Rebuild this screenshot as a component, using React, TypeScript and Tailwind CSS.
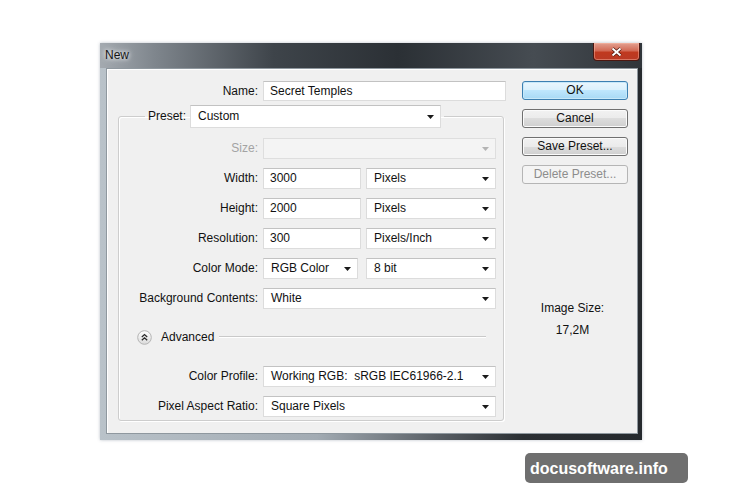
import React from 'react';

function Arrow({ disabled }: { disabled?: boolean }) {
  return (
    <svg width="7" height="4" viewBox="0 0 7 4" className="mr-[6px] shrink-0">
      <path d="M0 0 L7 0 L3.5 4 Z" fill={disabled ? '#b4b4b4' : '#1a1a1a'} />
    </svg>
  );
}

function Field({ value, width }: { value: string; width: string }) {
  return (
    <div
      className={`flex items-center h-[21px] ${width} bg-white border border-[#dcdcdc] border-t-[#c2c2c2] pl-[6px] text-[#111]`}
    >
      {value}
    </div>
  );
}

function Select({
  value,
  width,
  disabled,
  tall,
}: {
  value: string;
  width: string;
  disabled?: boolean;
  tall?: boolean;
}) {
  return (
    <div
      className={`flex items-center ${tall ? 'h-[23px]' : 'h-[21px]'} ${width} border ${
        disabled
          ? 'bg-[#f4f4f4] border-[#dedede]'
          : 'bg-white border-[#dcdcdc] border-t-[#c2c2c2]'
      }`}
    >
      <span className="flex-1 pl-[7px] whitespace-pre overflow-hidden text-[#111]">{value}</span>
      <Arrow disabled={disabled} />
    </div>
  );
}

function Row({
  label,
  children,
  muted,
}: {
  label: string;
  children: React.ReactNode;
  muted?: boolean;
}) {
  return (
    <div className="flex items-center">
      <div
        className={`w-[144px] pr-[5px] text-right whitespace-nowrap ${
          muted ? 'text-[#a3a3a3]' : 'text-[#111]'
        }`}
      >
        {label}
      </div>
      {children}
    </div>
  );
}

function Button({
  label,
  variant = 'normal',
}: {
  label: string;
  variant?: 'default' | 'normal' | 'disabled';
}) {
  const styles = {
    default:
      'border-[#3c7fb1] bg-[linear-gradient(to_bottom,#eaf6fd_0%,#d9f0fc_50%,#bee6fd_50%,#a7d9f5_100%)] text-[#111] shadow-[inset_0_0_0_1px_#c7e8f9]',
    normal:
      'border-[#707070] bg-[linear-gradient(to_bottom,#f2f2f2_0%,#ebebeb_50%,#dddddd_50%,#cfcfcf_100%)] text-[#111] shadow-[inset_0_0_0_1px_#fbfbfb]',
    disabled: 'border-[#b5b5b5] bg-[#f4f4f4] text-[#8d8d8d]',
  }[variant];
  return (
    <div
      className={`flex items-center justify-center w-[106px] h-[19px] rounded-[3px] border ${styles}`}
    >
      {label}
    </div>
  );
}

function AdvancedIcon() {
  return (
    <svg width="15" height="15" viewBox="0 0 15 15">
      <defs>
        <linearGradient id="adv" x1="0" y1="0" x2="0" y2="1">
          <stop offset="0" stopColor="#ffffff" />
          <stop offset="1" stopColor="#dadada" />
        </linearGradient>
      </defs>
      <circle cx="7.5" cy="7.5" r="6.8" fill="url(#adv)" stroke="#b4b4b4" />
      <path
        d="M4.8 7 L7.5 4.6 L10.2 7 M4.8 10.2 L7.5 7.8 L10.2 10.2"
        fill="none"
        stroke="#2a2a2a"
        strokeWidth="1.3"
      />
    </svg>
  );
}

export default function App() {
  return (
    <div className="relative w-[740px] h-[493px] bg-white overflow-hidden font-['Liberation_Sans',Arial,sans-serif] text-[12px] leading-[15px]">
      <div className="pt-[43px] pl-[100px]">
        <div className="w-[542px] h-[397px] flex flex-col bg-[linear-gradient(to_right,#b9c2c9_0%,#a2abb3_40%,#5a6066_62%,#2b2f33_78%,#262a2e_100%)] shadow-[0_0_3px_rgba(60,80,100,0.35)]">
          {/* title bar */}
          <div className="flex items-start h-[25px] bg-[linear-gradient(to_right,#a4aab0_0%,#7f868d_10%,#3e444a_32%,#2b3035_55%,#464c52_80%,#30353a_100%)]">
            <div className="pl-[5px] pt-[5px] text-[12px] text-[#151515] [text-shadow:0_0_4px_#ffffff,0_0_6px_#e0e4e8]">
              New
            </div>
            <div className="flex-1" />
            <div className="mr-[2px] w-[47px] h-[18px] flex items-center justify-center rounded-b-[4px] border border-t-0 border-[#4d1710] bg-[linear-gradient(to_bottom,#e3a191_0%,#d26a55_45%,#c0391f_55%,#b93a25_100%)] shadow-[inset_0_0_0_1px_rgba(255,190,170,0.45)]">
              <svg width="11" height="10" viewBox="0 0 11 10">
                <path d="M1.5 1.5 L9.5 8.5 M9.5 1.5 L1.5 8.5" stroke="#4a1208" strokeWidth="3.4" />
                <path d="M1.5 1.5 L9.5 8.5 M9.5 1.5 L1.5 8.5" stroke="#ffffff" strokeWidth="2" />
              </svg>
            </div>
          </div>

          {/* client area */}
          <div className="flex-1 pl-[6px] pr-[4px] pb-[6px] flex">
            <div className="flex-1 flex border border-[#8f989f] bg-[#f0f0f0] shadow-[inset_1px_1px_0_#ffffff]">
              {/* left column */}
              <div className="pt-[12px] flex flex-col">
                <div className="flex items-center">
                  <div className="w-[156px] pr-[5px] text-right text-[#111]">Name:</div>
                  <div className="flex items-center h-[20px] w-[243px] bg-white border border-[#dcdcdc] border-t-[#c2c2c2] pl-[6px] text-[#111]">
                    Secret Temples
                  </div>
                </div>

                <fieldset className="ml-[11px] mt-[4px] w-[386px] border border-[#cdcdcd] rounded-[3px] shadow-[inset_1px_1px_0_#ffffff,1px_1px_0_#ffffff]">
                  <legend className="ml-[26px] px-[3px]">
                    <div className="flex items-center gap-[4px]">
                      <span className="text-[#111]">Preset:</span>
                      <Select value="Custom" width="w-[251px]" tall />
                    </div>
                  </legend>
                  <div className="pt-[10px] pb-[3px] flex flex-col">
                    <div className="flex flex-col gap-[9px]">
                      <Row label="Size:" muted>
                        <Select value="" width="w-[233px]" disabled />
                      </Row>
                      <Row label="Width:">
                        <Field value="3000" width="w-[98px]" />
                        <div className="w-[5px]" />
                        <Select value="Pixels" width="w-[130px]" />
                      </Row>
                      <Row label="Height:">
                        <Field value="2000" width="w-[98px]" />
                        <div className="w-[5px]" />
                        <Select value="Pixels" width="w-[130px]" />
                      </Row>
                      <Row label="Resolution:">
                        <Field value="300" width="w-[98px]" />
                        <div className="w-[5px]" />
                        <Select value="Pixels/Inch" width="w-[130px]" />
                      </Row>
                      <Row label="Color Mode:">
                        <Select value="RGB Color" width="w-[95px]" />
                        <div className="w-[8px]" />
                        <Select value="8 bit" width="w-[130px]" />
                      </Row>
                      <Row label="Background Contents:">
                        <Select value="White" width="w-[233px]" />
                      </Row>
                    </div>

                    <div className="mt-[20px] h-[16px] flex items-center pl-[18px] pr-[17px]">
                      <AdvancedIcon />
                      <span className="ml-[9px] text-[#111]">Advanced</span>
                      <div className="ml-[5px] flex-1 border-t border-[#c9c9c9] border-b border-b-white" />
                    </div>

                    <div className="mt-[21px] flex flex-col gap-[9px]">
                      <Row label="Color Profile:">
                        <Select value="Working RGB:  sRGB IEC61966-2.1" width="w-[233px]" />
                      </Row>
                      <Row label="Pixel Aspect Ratio:">
                        <Select value="Square Pixels" width="w-[233px]" />
                      </Row>
                    </div>
                  </div>
                </fieldset>
              </div>

              {/* right column */}
              <div className="ml-[16px] pt-[12px] w-[106px] flex flex-col">
                <div className="flex flex-col gap-[9px]">
                  <Button label="OK" variant="default" />
                  <Button label="Cancel" />
                  <Button label="Save Preset..." />
                  <Button label="Delete Preset..." variant="disabled" />
                </div>
                <div className="mt-[117px] pr-[5px] text-center text-[#111]">Image Size:</div>
                <div className="mt-[7px] pr-[5px] text-center text-[#111]">17,2M</div>
              </div>
            </div>
          </div>
        </div>
      </div>

      {/* watermark */}
      <div className="absolute left-[525px] top-[453px] w-[163px] h-[30px] rounded-[5px] bg-[#6f6f6f] flex items-center pl-[5px] text-white font-bold text-[16px]">
        docusoftware.info
      </div>
    </div>
  );
}
